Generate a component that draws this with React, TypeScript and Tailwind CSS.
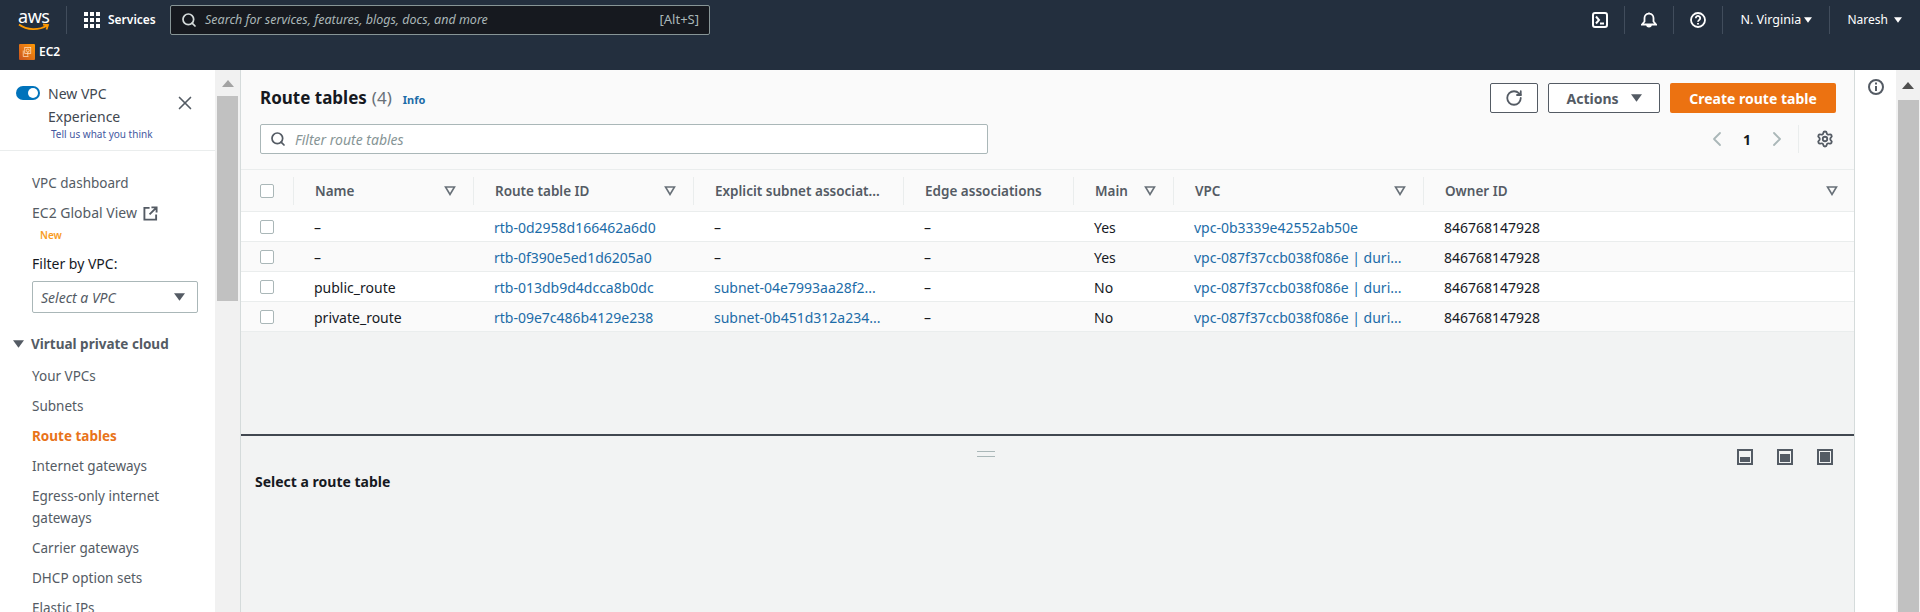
import React from 'react';
import { ChevronLeft, ChevronRight, RotateCw, Search, Settings, X } from 'lucide-react';

const font = "font-['Noto_Sans',sans-serif]";

const navItems = ['Your VPCs', 'Subnets', 'Route tables', 'Internet gateways', 'Egress-only internet gateways', 'Carrier gateways', 'DHCP option sets', 'Elastic IPs'];

const columns = [
  { label: 'Name', filter: true },
  { label: 'Route table ID', filter: true },
  { label: 'Explicit subnet associat...', filter: false },
  { label: 'Edge associations', filter: false },
  { label: 'Main', filter: true },
  { label: 'VPC', filter: true },
  { label: 'Owner ID', filter: true },
];

const rows = [
  { name: '–', id: 'rtb-0d2958d166462a6d0', subnet: '–', main: 'Yes', vpc: 'vpc-0b3339e42552ab50e' },
  { name: '–', id: 'rtb-0f390e5ed1d6205a0', subnet: '–', main: 'Yes', vpc: 'vpc-087f37ccb038f086e | duri...' },
  { name: 'public_route', id: 'rtb-013db9d4dcca8b0dc', subnet: 'subnet-04e7993aa28f2...', main: 'No', vpc: 'vpc-087f37ccb038f086e | duri...' },
  { name: 'private_route', id: 'rtb-09e7c486b4129e238', subnet: 'subnet-0b451d312a234...', main: 'No', vpc: 'vpc-087f37ccb038f086e | duri...' },
];

const gridCols = 'grid grid-cols-[53px_180px_220px_210px_170px_100px_250px_1fr]';

const Caret = ({ className }: { className: string }) => (
  <svg viewBox="0 0 12 8" className={className} fill="currentColor">
    <path d="M0 0h12L6 8z" />
  </svg>
);

const FilterIcon = () => (
  <svg viewBox="0 0 12 10" className="h-[10px] w-[12px] text-[#687078]" fill="none" stroke="currentColor" strokeWidth="1.6">
    <path d="M1.5 1h9L6 8.5z" />
  </svg>
);

const Checkbox = () => <span className="block h-[14px] w-[14px] rounded-[2px] border border-[#aab7b8] bg-white" />;

const ScrollBar = ({ head, arrow, thumb }: { head: string; arrow: string; thumb: string }) => (
  <div className="flex h-full w-full flex-col items-center bg-[#f1f1f1]">
    <div className={`flex items-center justify-center ${head}`}>
      <svg viewBox="0 0 12 7" className={`h-[7px] w-[12px] ${arrow}`} fill="currentColor">
        <path d="M6 0l6 7H0z" />
      </svg>
    </div>
    <div className={`w-[21px] bg-[#c1c1c1] ${thumb}`} />
  </div>
);

const Sidebar = () => (
  <aside className="w-[215px] shrink-0 overflow-hidden bg-white text-[14px] text-[#545b64]">
    <div className="relative h-[81px] border-b border-[#eaeded] pl-[48px] pt-[13px]">
      <span className="absolute left-[16px] top-[16px] flex h-[14px] w-[24px] items-center justify-end rounded-full bg-[#0073bb] pr-[2px]">
        <span className="h-[10px] w-[10px] rounded-full bg-white" />
      </span>
      <div className="leading-[22px] text-[#414750]">New VPC</div>
      <div className="pt-[1px] leading-[22px] text-[#414750]">Experience</div>
      <div className="pl-[3px] text-[10px] leading-[12px] text-[#44599f]">Tell us what you think</div>
      <X className="absolute left-[174px] top-[22px] h-[22px] w-[22px] text-[#545b64]" strokeWidth={1.8} />
    </div>
    <nav className="pl-[32px] pr-[17px] pt-[21px]">
      <div className="h-[30px] text-[13.5px] leading-[22px]">VPC dashboard</div>
      <div className="flex h-[22px] items-center gap-[6px] leading-[22px]">
        EC2 Global View
        <svg viewBox="0 0 16 16" className="h-[15px] w-[15px]" fill="none" stroke="currentColor" strokeWidth="2">
          <path d="M7 2H1.5v12.5H14V9M9 1.5h5.5V7M14 2L7 9" />
        </svg>
      </div>
      <div className="pl-[8px] pt-[3px] text-[10px] font-semibold leading-[16px] text-[#f89c24]">New</div>
      <div className="pt-[10px] leading-[22px] text-[#16191f]">Filter by VPC:</div>
      <div className="mt-[6px] flex h-[32px] items-center justify-between rounded-[2px] border border-[#aab7b8] pl-[8px] pr-[12px] italic">
        Select a VPC
        <Caret className="h-[8px] w-[11px] text-[#545b64]" />
      </div>
      <div className="relative -ml-[1px] mt-[20px] h-[22px] text-[13.5px] font-bold leading-[22px] text-[#545b64]">
        <Caret className="absolute -left-[18px] top-[7px] h-[8px] w-[11px] text-[#545b64]" />
        Virtual private cloud
      </div>
      <ul className="pt-[6px] text-[13.5px]">
        {navItems.map((item) => (
          <li
            key={item}
            className={`py-[4px] leading-[22px] ${item === 'Route tables' ? 'font-bold text-[#e8731a]' : ''}`}
          >
            {item}
          </li>
        ))}
      </ul>
    </nav>
  </aside>
);

const TableHeader = () => (
  <div className={`${gridCols} h-[43px] items-center border-y border-[#eaeded] bg-[#fafafa] text-[13.5px] font-semibold text-[#545b64]`}>
    <div className="flex h-[28px] items-center border-r border-[#eaeded] pl-[19px]">
      <Checkbox />
    </div>
    {columns.map((col, i) => (
      <div
        key={col.label}
        className={`flex h-[28px] items-center justify-between pl-[21px] ${i < columns.length - 1 ? 'border-r border-[#eaeded] pr-[17px]' : 'pr-[16px]'}`}
      >
        <span className="whitespace-nowrap pt-[1px]">{col.label}</span>
        {col.filter && <FilterIcon />}
      </div>
    ))}
  </div>
);

const TableRow = ({ row, even }: { row: (typeof rows)[number]; even: boolean }) => {
  const cell = 'pl-[20px] pt-[1px] whitespace-nowrap';
  const link = 'text-[#1c6ca8]';
  return (
    <div className={`${gridCols} h-[30px] items-center border-b border-[#eaeded] text-[14px] text-[#16191f] ${even ? 'bg-[#fafafa]' : 'bg-white'}`}>
      <div className="pl-[19px]">
        <Checkbox />
      </div>
      <div className={cell}>{row.name}</div>
      <div className={`${cell} ${link}`}>{row.id}</div>
      <div className={`${cell} ${row.subnet === '–' ? '' : link}`}>{row.subnet}</div>
      <div className={cell}>–</div>
      <div className={cell}>{row.main}</div>
      <div className={`${cell} ${link}`}>{row.vpc}</div>
      <div className={cell}>846768147928</div>
    </div>
  );
};

const PreviewIcon = ({ fill }: { fill: string }) => (
  <span className="relative block h-[16px] w-[16px] border-[2px] border-[#545b64] bg-[#f2f3f3]">
    <span className={`absolute inset-x-[1px] bottom-[1px] bg-[#545b64] ${fill}`} />
  </span>
);

const Main = () => (
  <main className="flex min-w-0 flex-1 flex-col border-x border-[#d5dbdb] bg-[#f2f3f3]">
    <div className="h-[99px] bg-[#fafafa] pl-[19px] pr-[18px]">
      <div className="flex h-[43px] items-end justify-between">
        <div className="flex items-baseline">
          <h1 className="text-[17px] font-bold leading-[30px] text-[#16191f]">Route tables</h1>
          <span className="ml-[5px] text-[17px] leading-[30px] text-[#687078]">(4)</span>
          <span className="ml-[11px] text-[11px] font-bold text-[#1c6ca8]">Info</span>
        </div>
        <div className="flex gap-[10px]">
          <button className="flex h-[30px] w-[48px] items-center justify-center rounded-[2px] border border-[#545b64] bg-white">
            <RotateCw className="h-[18px] w-[18px] text-[#545b64]" strokeWidth={2.4} />
          </button>
          <button className="flex h-[30px] w-[112px] items-center justify-center gap-[12px] rounded-[2px] border border-[#545b64] bg-white text-[14px] font-bold text-[#545b64]">
            Actions
            <Caret className="h-[8px] w-[11px]" />
          </button>
          <button className="h-[30px] w-[166px] rounded-[2px] bg-[#ec7211] text-[14px] font-bold text-white">Create route table</button>
        </div>
      </div>
      <div className="flex items-center justify-between pt-[11px]">
        <div className="flex h-[30px] w-[728px] items-center rounded-[2px] border border-[#aab7b8] bg-white pl-[9px]">
          <Search className="h-[16px] w-[16px] text-[#545b64]" strokeWidth={2.6} />
          <span className="ml-[9px] text-[14px] italic text-[#879596]">Filter route tables</span>
        </div>
        <div className="flex items-center">
          <ChevronLeft className="h-[24px] w-[24px] text-[#aab7b8]" strokeWidth={1.8} />
          <span className="w-[36px] text-center text-[14px] font-bold text-[#16191f]">1</span>
          <ChevronRight className="h-[24px] w-[24px] text-[#aab7b8]" strokeWidth={1.8} />
          <span className="ml-[9px] mr-[17px] h-[28px] w-px bg-[#eaeded]" />
          <Settings className="mr-[2px] h-[18px] w-[18px] text-[#545b64]" strokeWidth={2.4} />
        </div>
      </div>
    </div>
    <TableHeader />
    {rows.map((row, i) => (
      <TableRow key={row.id} row={row} even={i % 2 === 1} />
    ))}
    <div className="h-[102px]" />
    <section className="relative flex-1 border-t-2 border-[#414750] pl-[14px]">
      <div className="flex h-[32px] items-center justify-center pr-[138px] pt-[4px]">
        <span className="h-[6px] w-[18px] border-y border-[#aab7b8]" />
      </div>
      <div className="absolute right-[21px] top-[13px] flex gap-[24px]">
        <PreviewIcon fill="h-[5px]" />
        <PreviewIcon fill="h-[8px]" />
        <PreviewIcon fill="h-[10px]" />
      </div>
      <h2 className="pt-[3px] text-[14px] font-bold leading-[22px] text-[#16191f]">Select a route table</h2>
    </section>
  </main>
);

const Header = () => (
  <header className="h-[70px] shrink-0 bg-[#232f3e] text-[12px] text-white">
    <div className="flex h-[40px] items-center">
      <div className="relative ml-[18px] h-[30px] w-[32px]">
        <span className="block text-[18px] leading-[22px] tracking-tight">aws</span>
        <svg viewBox="0 0 32 9" className="absolute left-0 top-[18px] h-[9px] w-[32px]" fill="none" stroke="#ff9900" strokeWidth="1.8">
          <path d="M1 1.5C9 7.5 21 7.5 29 2.5M25 1.5l5 .5-1.5 4.5" />
        </svg>
      </div>
      <span className="ml-[16px] h-[28px] w-px bg-[#414d5c]" />
      <svg viewBox="0 0 16 16" className="ml-[17px] h-[16px] w-[16px]" fill="currentColor">
        <path d="M0 0h4v4H0zM6 0h4v4H6zM12 0h4v4h-4zM0 6h4v4H0zM6 6h4v4H6zM12 6h4v4h-4zM0 12h4v4H0zM6 12h4v4H6zM12 12h4v4h-4z" />
      </svg>
      <span className="ml-[8px] w-[45px] whitespace-nowrap font-semibold">Services</span>
      <div className="ml-[17px] flex h-[30px] w-[540px] items-center rounded-[2px] border border-[#879596] bg-[#16191f] px-[10px]">
        <Search className="h-[16px] w-[16px] text-[#d5dbdb]" strokeWidth={2.6} />
        <span className="ml-[8px] flex-1 text-[12.5px] italic text-[#aab7b8]">Search for services, features, blogs, docs, and more</span>
        <span className="text-[13px] text-[#aab7b8]">[Alt+S]</span>
      </div>
      <div className="ml-auto flex items-center">
        <svg viewBox="0 0 16 16" className="h-[16px] w-[16px]" fill="none" stroke="currentColor" strokeWidth="2">
          <rect x="1" y="1" width="14" height="14" rx="2" />
          <path d="M4 4.5L7 8l-3 3.5M8 11.5h4" />
        </svg>
        <span className="mx-[16px] h-[28px] w-px bg-[#414d5c]" />
        <svg viewBox="0 0 16 16" className="h-[16px] w-[16px]" fill="none" stroke="currentColor" strokeWidth="1.8">
          <path d="M8 .5v1.5M1 12.5l2.5-3V6a4.5 4.5 0 019 0v3.5l2.5 3zM6 12.5a2 2 0 004 0" />
        </svg>
        <span className="mx-[16px] h-[28px] w-px bg-[#414d5c]" />
        <svg viewBox="0 0 16 16" className="h-[16px] w-[16px]" fill="none" stroke="currentColor" strokeWidth="1.8">
          <circle cx="8" cy="8" r="7" />
          <path d="M5.8 6.2a2.2 2.2 0 114 1.2C9 8.3 8 8.5 8 9.8M8 11v1.6" />
        </svg>
        <span className="ml-[16px] h-[28px] w-px bg-[#414d5c]" />
        <span className="ml-[17px] w-[58px] whitespace-nowrap text-[12.5px]">N. Virginia</span>
        <Caret className="ml-[6px] h-[6px] w-[8px]" />
        <span className="ml-[17px] h-[28px] w-px bg-[#414d5c]" />
        <span className="ml-[17px]">Naresh</span>
        <Caret className="ml-[6px] mr-[18px] h-[6px] w-[8px]" />
      </div>
    </div>
    <div className="flex h-[30px] items-center pb-[6px] pl-[19px] text-[12px] font-semibold">
      <span className="flex h-[16px] w-[16px] items-center justify-center rounded-[1px] bg-linear-to-tr from-[#c8511b] to-[#ff9900]">
        <svg viewBox="0 0 16 16" className="h-[12px] w-[12px]" fill="none" stroke="#ffe0c2" strokeWidth="1">
          <rect x="5" y="2" width="8" height="8" />
          <circle cx="9" cy="6" r="2" />
          <path d="M3 6v8h7M9 8v5" />
        </svg>
      </span>
      <span className="ml-[4px]">EC2</span>
    </div>
  </header>
);

export default function App() {
  return (
    <div className={`flex h-[612px] w-[1920px] flex-col overflow-hidden bg-white ${font}`}>
      <Header />
      <div className="flex min-h-0 flex-1">
        <Sidebar />
        <div className="w-[25px] shrink-0">
          <ScrollBar head="h-[26px]" arrow="text-[#a3a3a3]" thumb="h-[205px]" />
        </div>
        <Main />
        <div className="flex w-[41px] shrink-0 justify-center bg-white pt-[9px]">
          <svg viewBox="0 0 16 16" className="h-[16px] w-[16px] text-[#545b64]" fill="none" stroke="currentColor" strokeWidth="2">
            <circle cx="8" cy="8" r="7" />
            <path d="M8 7v5M8 3.6v2" />
          </svg>
        </div>
        <div className="w-[24px] shrink-0">
          <ScrollBar head="h-[30px]" arrow="text-[#505050]" thumb="flex-1" />
        </div>
      </div>
    </div>
  );
}
